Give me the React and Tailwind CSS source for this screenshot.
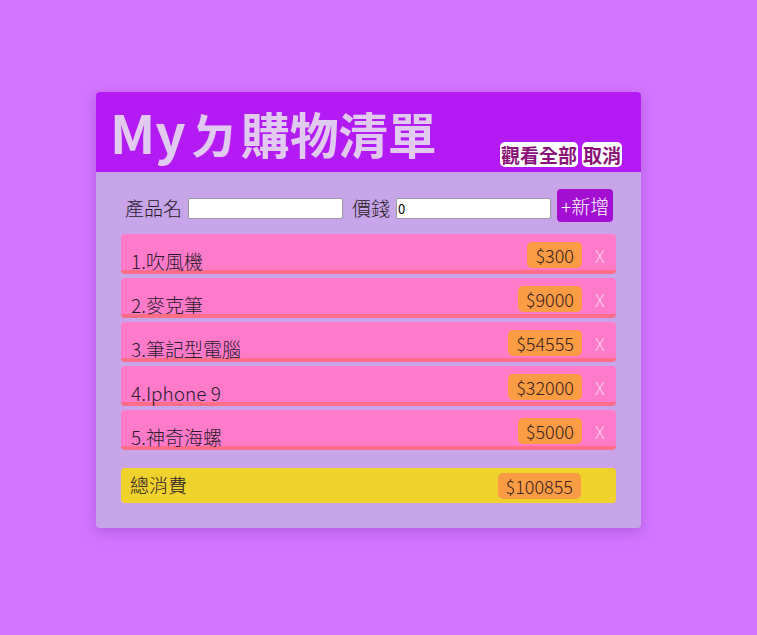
import React from 'react';

const items = [
  { name: '吹風機', price: 300 },
  { name: '麥克筆', price: 9000 },
  { name: '筆記型電腦', price: 54555 },
  { name: 'Iphone 9', price: 32000 },
  { name: '神奇海螺', price: 5000 },
];

const font = { fontFamily: '"Noto Sans CJK TC", "Noto Sans", sans-serif' };

const Row = ({ index, item }) => (
  <div className="relative flex h-[40px] items-end rounded-[4px] border-b-4 border-[#ff6e86] bg-[#ff7bc9] pl-[10px] pr-[10px]">
    <span className="mb-[-6px] text-[19px] font-light leading-[30px] text-[#2a1a2a]">
      {index + 1}.{item.name}
    </span>
    <div className="ml-auto mb-[2px] flex items-center">
      <span className="rounded-[5px] bg-[#f99c43] px-[8px] text-[18px] font-light leading-[26px] text-[#3a2020]">
        ${item.price}
      </span>
      <span className="ml-[13px] w-[11px] text-[18px] font-light leading-[26px] text-[#fbd3ea]">X</span>
    </div>
  </div>
);

export default function App() {
  const total = items.reduce((s, i) => s + i.price, 0);
  return (
    <div className="min-h-[635px] bg-[#d376ff] pt-[92px]" style={font}>
      <div className="ml-[96px] w-[545px] overflow-hidden rounded-[4px] bg-[#c8a5e8] shadow-[0_4px_14px_rgba(120,40,160,0.35)]">
        <div className="flex h-[80px] items-end bg-[#b41af4] pl-[14px] pr-[19px]">
          <h1 className="mb-[7px] flex items-baseline font-semibold leading-[64px] text-[#e0caef]">
            <span className="text-[53px]">My</span>
            <span className="ml-[4px] mr-[3px] text-[48px]">ㄉ</span>
            <span className="text-[49px]">購物清單</span>
          </h1>
          <div className="ml-auto mb-[5px] flex gap-[4px]">
            <button className="rounded-[5px] bg-white px-[1px] text-[19px] font-bold leading-[25px] text-[#8b1178]">觀看全部</button>
            <button className="rounded-[5px] bg-white px-[1px] text-[19px] font-bold leading-[25px] text-[#8b1178]">取消</button>
          </div>
        </div>
        <div className="px-[25px] pt-[17px] pb-[25px]">
          <div className="flex items-end pl-[4px]">
            <span className="mb-[1px] text-[19px] font-light leading-[26px] text-[#2a1a2a]">產品名</span>
            <input className="mb-[3px] ml-[6px] h-[21px] w-[155px] rounded-[2px] border border-[#999] bg-white px-[1px] text-[13px]" />
            <span className="mb-[1px] ml-[9px] text-[19px] font-light leading-[26px] text-[#2a1a2a]">價錢</span>
            <input defaultValue="0" className="mb-[3px] ml-[6px] h-[21px] w-[155px] rounded-[2px] border border-[#999] bg-white px-[1px] text-[13px]" />
            <button className="ml-[6px] h-[33px] rounded-[4px] bg-[#a20fd3] px-[4px] text-[19px] font-light leading-[33px] text-white">+新增</button>
          </div>
          <div className="mt-[12px] flex flex-col gap-[4px]">
            {items.map((item, i) => (
              <Row key={i} index={i} item={item} />
            ))}
          </div>
          <div className="mt-[18px] flex h-[35px] items-center rounded-[4px] bg-[#efd22c] pl-[9px] pr-[35px]">
            <span className="text-[19px] font-light text-[#2a1a2a]">總消費</span>
            <span className="ml-auto rounded-[5px] bg-[#f99c43] px-[8px] text-[18px] font-light leading-[26px] text-[#3a2020]">${total}</span>
          </div>
        </div>
      </div>
    </div>
  );
}
